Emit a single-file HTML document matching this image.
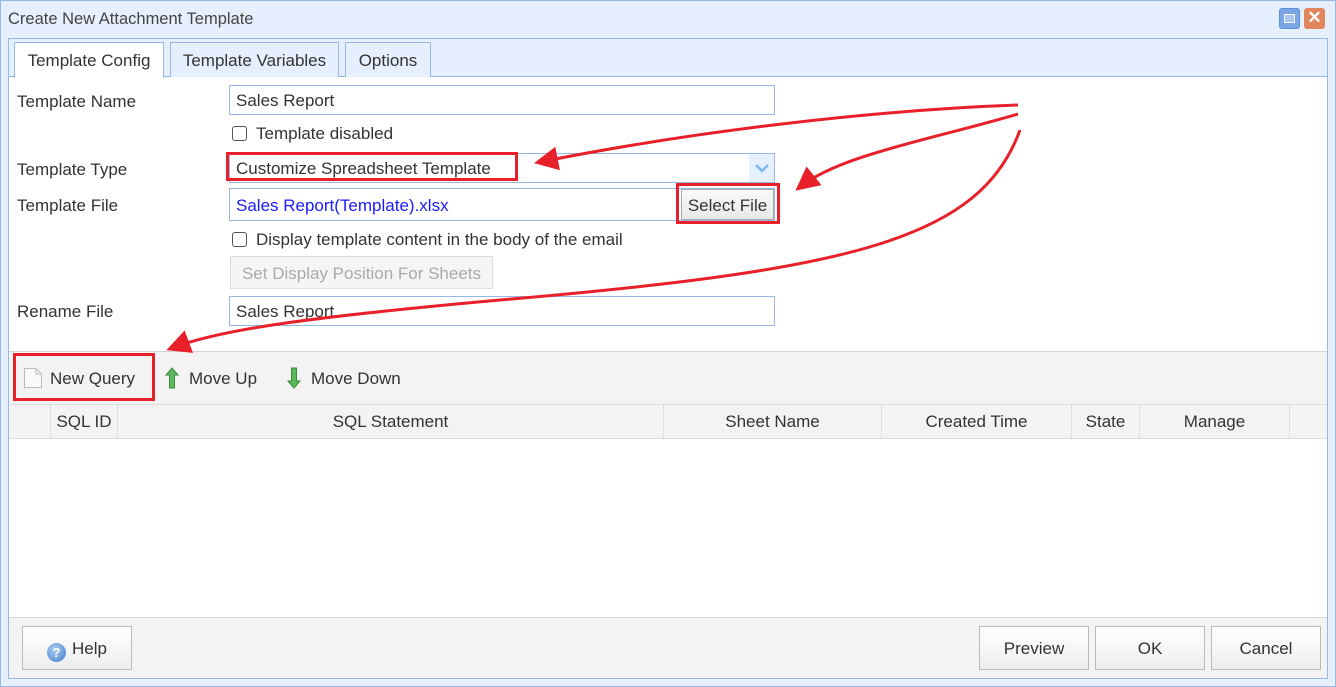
<!DOCTYPE html>
<html><head><meta charset="utf-8"><style>
*{box-sizing:border-box;margin:0;padding:0}
body{width:1336px;height:687px;position:relative;overflow:hidden;background:#fff;font-family:"Liberation Sans",sans-serif;font-size:17px;color:#333}
.a{position:absolute}
.inp{position:absolute;border:1px solid #95b8e7;background:#fff;height:30px;padding-left:6px;line-height:30px;white-space:nowrap}
.lbl{position:absolute;left:17px;color:#333}
.cb{position:absolute;width:15px;height:15px;border:1.5px solid #555;border-radius:3px;background:#fff}
.btn{position:absolute;border:1px solid #bbb;background:linear-gradient(#fff,#ededed);text-align:center;line-height:44px;height:44px;color:#333}
.th{position:absolute;top:405px;height:33px;line-height:33px;text-align:center;border-right:1px dotted #ccc}
</style></head><body>
<div class="a" style="left:0;top:0;width:1336px;height:687px;background:#e6effd;border:1px solid #95b8e7"></div>
<div class="a" style="left:8px;top:10px;font-size:16.5px;color:#444">Create New Attachment Template</div>
<div class="a" style="left:1279px;top:8px;width:21px;height:21px;border-radius:3px;background:#7aa6e6;border:1px solid #5f8fd8"><div class="a" style="left:4px;top:5px;width:11px;height:9px;border:1.5px solid #fff;background:#a9c6f2"></div></div>
<div class="a" style="left:1304px;top:8px;width:21px;height:21px;border-radius:3px;background:#e0855c;color:#fff;font-weight:bold;text-align:center;line-height:20px;font-size:17px">✕</div>
<!-- panel -->
<div class="a" style="left:8px;top:38px;width:1320px;height:641px;border:1px solid #95b8e7;background:#fff"></div>
<div class="a" style="left:9px;top:39px;width:1318px;height:38px;background:#e6effd;border-bottom:1px solid #95b8e7"></div>
<div class="a" style="left:14px;top:42px;width:150px;height:36px;background:#fff;border:1px solid #95b8e7;border-bottom:none;text-align:center;line-height:36px">Template Config</div>
<div class="a" style="left:170px;top:42px;width:169px;height:35px;background:#e6effd;border:1px solid #95b8e7;border-bottom:none;text-align:center;line-height:36px">Template Variables</div>
<div class="a" style="left:345px;top:42px;width:86px;height:35px;background:#e6effd;border:1px solid #95b8e7;border-bottom:none;text-align:center;line-height:36px">Options</div>

<div class="lbl" style="top:92px">Template Name</div>
<div class="inp" style="left:229px;top:85px;width:546px">Sales Report</div>
<div class="cb" style="left:232px;top:126px"></div>
<div class="a" style="left:256px;top:124px">Template disabled</div>
<div class="lbl" style="top:160px">Template Type</div>
<div class="inp" style="left:229px;top:153px;width:546px">Customize Spreadsheet Template</div>
<div class="a" style="left:749px;top:154px;width:25px;height:28px;background:#e6effd;text-align:center"><svg width="14" height="10" viewBox="0 0 14 10" style="margin-top:9px"><path d="M1 2 L7 8 L13 2" stroke="#7ab8f0" stroke-width="2.5" fill="none"/></svg></div>
<div class="lbl" style="top:196px">Template File</div>
<div class="inp" style="left:229px;top:188px;width:546px;height:33px;line-height:33px;color:#1a1aff">Sales Report(Template).xlsx</div>
<div class="a" style="left:681px;top:189px;width:93px;height:31px;border:1px solid #aaa;background:linear-gradient(#fafafa,#e8e8e8);text-align:center;line-height:31px">Select File</div>
<div class="cb" style="left:232px;top:232px"></div>
<div class="a" style="left:256px;top:230px">Display template content in the body of the email</div>
<div class="a" style="left:230px;top:256px;width:263px;height:33px;border:1px solid #ddd;background:#f5f5f5;color:#aaa;text-align:center;line-height:33px">Set Display Position For Sheets</div>
<div class="lbl" style="top:302px">Rename File</div>
<div class="inp" style="left:229px;top:296px;width:546px">Sales Report</div>

<!-- toolbar -->
<div class="a" style="left:9px;top:351px;width:1318px;height:54px;background:#f3f3f3;border-top:1px solid #d4d4d4;border-bottom:1px solid #ddd"></div>
<svg class="a" style="left:23px;top:367px" width="20" height="22"><path d="M1.5 1.5 H13 L18.5 7 V20.5 H1.5 Z" fill="#fafafa" stroke="#bbb"/><path d="M13 1.5 V7 H18.5" fill="none" stroke="#bbb"/></svg>
<div class="a" style="left:50px;top:369px">New Query</div>
<svg class="a" style="left:164px;top:367px" width="16" height="22"><path d="M8 1 L14 8 H10.5 V21 H5.5 V8 H2 Z" fill="#5cb85c" stroke="#3a8a3a"/></svg>
<div class="a" style="left:189px;top:369px">Move Up</div>
<svg class="a" style="left:286px;top:367px" width="16" height="22"><path d="M8 21 L14 14 H10.5 V1 H5.5 V14 H2 Z" fill="#5cb85c" stroke="#3a8a3a"/></svg>
<div class="a" style="left:311px;top:369px">Move Down</div>
<!-- grid header -->
<div class="a" style="left:9px;top:405px;width:1318px;height:34px;background:#f3f3f3;border-bottom:1px solid #ddd"></div>
<div class="th" style="left:9px;width:42px"></div>
<div class="th" style="left:51px;width:67px">SQL ID</div>
<div class="th" style="left:118px;width:546px">SQL Statement</div>
<div class="th" style="left:664px;width:218px">Sheet Name</div>
<div class="th" style="left:882px;width:190px">Created Time</div>
<div class="th" style="left:1072px;width:68px">State</div>
<div class="th" style="left:1140px;width:150px">Manage</div>
<!-- footer -->
<div class="a" style="left:9px;top:617px;width:1318px;height:61px;background:#f3f3f3;border-top:1px solid #d4d4d4"></div>
<div class="btn" style="left:22px;top:626px;width:110px"><span style="display:inline-block;width:19px;height:19px;border-radius:50%;background:radial-gradient(circle at 40% 35%,#a9ccf3,#3f7dc9);color:#fff;font-size:13px;font-weight:bold;line-height:19px;vertical-align:-3px;margin-right:6px">?</span>Help</div>
<div class="btn" style="left:979px;top:626px;width:110px">Preview</div>
<div class="btn" style="left:1095px;top:626px;width:110px">OK</div>
<div class="btn" style="left:1211px;top:626px;width:110px">Cancel</div>

<!-- red annotations -->
<div class="a" style="left:226px;top:152px;width:292px;height:29px;border:3px solid #e8202a"></div>
<div class="a" style="left:676px;top:183px;width:104px;height:41px;border:3px solid #e8202a"></div>
<div class="a" style="left:13px;top:353px;width:142px;height:48px;border:3px solid #e8202a"></div>
<svg class="a" style="left:0;top:0" width="1336" height="687">
<defs><marker id="m" markerWidth="8" markerHeight="8" refX="6" refY="4" orient="auto" markerUnits="strokeWidth"><path d="M0 0 L8 4 L0 8 Z" fill="#e8202a"/></marker></defs>
<g fill="none" stroke="#e8202a" stroke-width="3">
<path d="M1018 105 C880 110 700 130 540 162" marker-end="url(#m)"/>
<path d="M1018 114 C930 140 840 155 800 187" marker-end="url(#m)"/>
<path d="M1020 130 C980 240 850 270 500 300 C300 318 220 330 172 348" marker-end="url(#m)"/>
</g></svg>
</body></html>
